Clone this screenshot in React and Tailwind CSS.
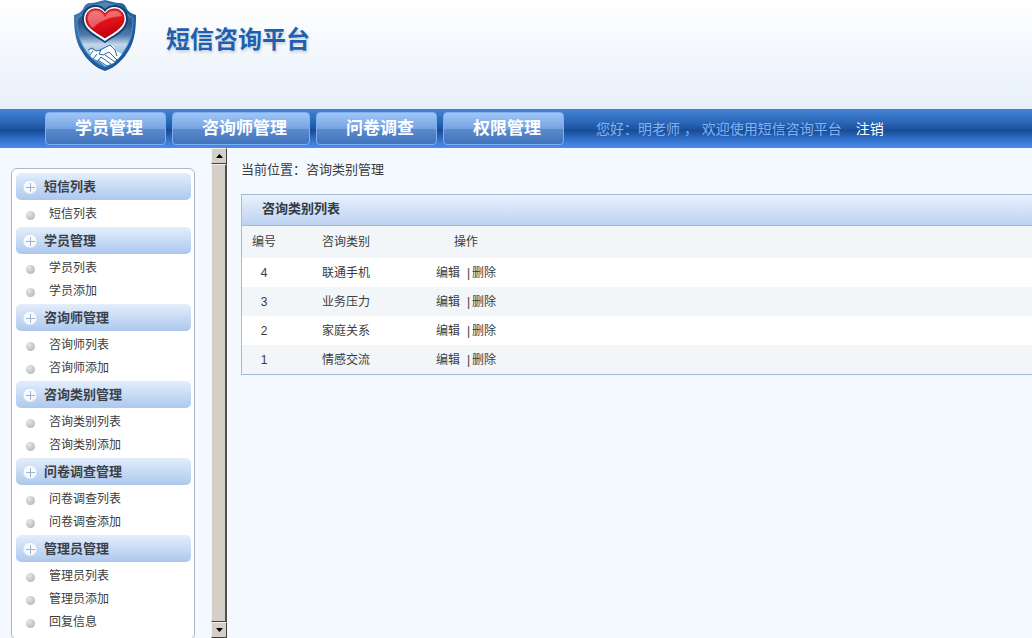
import React from "react";

const navItems = ["学员管理", "咨询师管理", "问卷调查", "权限管理"];

const menu = [
  { title: "短信列表", items: ["短信列表"] },
  { title: "学员管理", items: ["学员列表", "学员添加"] },
  { title: "咨询师管理", items: ["咨询师列表", "咨询师添加"] },
  { title: "咨询类别管理", items: ["咨询类别列表", "咨询类别添加"] },
  { title: "问卷调查管理", items: ["问卷调查列表", "问卷调查添加"] },
  { title: "管理员管理", items: ["管理员列表", "管理员添加", "回复信息"] },
];

const categories = [
  { id: 4, name: "联通手机" },
  { id: 3, name: "业务压力" },
  { id: 2, name: "家庭关系" },
  { id: 1, name: "情感交流" },
];

const Logo = () => (
  <svg viewBox="0 0 64 72" className="h-[72px] w-16" aria-hidden="true">
    <defs>
      <linearGradient id="rim" x1="0" y1="0" x2="1" y2="1">
        <stop offset="0" stopColor="#4a80b4" />
        <stop offset="0.5" stopColor="#1f5f9f" />
        <stop offset="1" stopColor="#1a5596" />
      </linearGradient>
      <linearGradient id="face" x1="0" y1="0" x2="0" y2="1">
        <stop offset="0" stopColor="#5f87b0" />
        <stop offset="0.3" stopColor="#2a5688" />
        <stop offset="0.5" stopColor="#4d7bab" />
        <stop offset="0.65" stopColor="#c3d7ea" />
        <stop offset="0.78" stopColor="#9fc3e3" />
        <stop offset="1" stopColor="#2a6fb4" />
      </linearGradient>
      <linearGradient id="heart" x1="0" y1="0" x2="0.3" y2="1">
        <stop offset="0" stopColor="#f0474c" />
        <stop offset="0.5" stopColor="#e3141b" />
        <stop offset="1" stopColor="#c4000c" />
      </linearGradient>
    </defs>
    <path
      d="M32 0C26 1 22 3 17 3C14 3 12 5 11 7C9 12 5 14 1 15C1 28 2 40 8 50C13 59 22 68 32 71C42 68 51 59 56 50C62 40 63 28 63 15C59 14 55 12 53 7C52 5 50 3 47 3C42 3 38 1 32 0Z"
      fill="url(#rim)"
    />
    <path
      d="M32 3C27 4 22 6 17 6C15 7 14 8 13 10C11 14 8 16 4 18C4 30 6 40 11 48C16 57 24 64 32 67C40 64 48 57 53 48C58 40 60 30 60 18C56 16 53 14 51 10C50 8 49 7 47 6C42 6 37 4 32 3Z"
      fill="url(#face)"
      stroke="#4f92cf"
      strokeWidth="1"
    />
    <path
      d="M32 43C24 37 9 32 9 19C9 10 15 5 22 5C27 5 30 7 32 9C34 7 37 5 42 5C49 5 55 10 55 19C55 32 40 37 32 43Z"
      fill="#173f74"
    />
    <path
      d="M32 41C24 35 11 30 11 19C11 11 17 7 22 7C27 7 30 9 32 12C34 9 37 7 42 7C47 7 53 11 53 19C53 30 40 35 32 41Z"
      fill="#ffffff"
    />
    <path
      d="M32 38C25 33 13 28 13 19C13 12 18 9 22 9C27 9 30 11 32 14C34 11 37 9 42 9C46 9 51 12 51 19C51 28 39 33 32 38Z"
      fill="url(#heart)"
      stroke="#a10a14"
      strokeWidth="1"
    />
    <path
      d="M15 19C15 13 19 11 23 11C28 11 30 14 32 17C34 13 37 11 41 11C45 11 48 13 49 16C40 17 28 19 20 28C17 26 15 23 15 19Z"
      fill="#ffffff"
      opacity="0.32"
    />
    <path
      d="M16 49L23 51L28 50L37 45L42 50L45 57L41 63L32 66L27 62L18 57Z"
      fill="#ffffff"
    />
    <path
      d="M36 46L40 46L43 51L49 54L45 59L41 57Z"
      fill="#ffffff"
    />
    <path
      d="M27 50L37 45L42 50L44 56M28 50L26 54L30 55L36 52L44 60M32 55L42 62M28 57L38 64M25 60L34 66M15 50L19 48L23 51L28 50M17 55L20 51M20 59L24 54M24 62L28 57"
      fill="none"
      stroke="#2a69ab"
      strokeWidth="1"
      strokeLinejoin="round"
    />
  </svg>
);

const PlusIcon = () => (
  <svg viewBox="0 0 16 16" className="h-4 w-4" aria-hidden="true">
    <circle cx="8" cy="8" r="7" fill="#f6f9fd" stroke="#cfdaea" />
    <path d="M4 8.5H13M8.5 4V13" stroke="#9db4d2" strokeWidth="1" />
  </svg>
);

const Header = () => (
  <header className="flex h-[109px] shrink-0 items-start bg-gradient-to-b from-white to-[#e7f0fa] pl-[73px]">
    <Logo />
    <h1 className="pt-6 pl-[29px] text-[24px] leading-8 font-bold text-[#1f5fae] [text-shadow:1px_2px_3px_#c4cedb]">
      短信咨询平台
    </h1>
  </header>
);

const NavBar = () => (
  <nav className="flex h-[39px] shrink-0 items-center bg-[linear-gradient(to_bottom,#4383d6_0%,#2b65b5_35%,#1d539f_52%,#174a92_54%,#2f6dc4_75%,#4a8df0_100%)] pl-[45px] whitespace-nowrap">
    <div className="flex gap-[6px]">
      {navItems.map((item) => (
        <button
          key={item}
          type="button"
          className="h-[33px] rounded border border-[#7fb0ee] bg-[linear-gradient(to_bottom,#a0c6f8_0%,#76a3e2_50%,#5b8acd_52%,#4173bb_100%)] pr-[22px] pl-[29px] text-[17px] leading-6 font-bold text-white"
        >
          {item}
        </button>
      ))}
    </div>
    <p className="pl-8 text-sm whitespace-pre text-[#7fb2f5]">
      您好：明老师 ， 欢迎使用短信咨询平台
    </p>
    <a href="#logout" className="pl-[14px] text-sm text-white">
      注销
    </a>
  </nav>
);

const Sidebar = () => (
  <aside className="w-[211px] shrink-0 overflow-hidden pt-5 pl-[11px]">
    <div className="w-[184px] rounded-md border border-[#a9b7c9] bg-white py-1 pr-[3px] pl-1">
      {menu.map((group) => (
        <section key={group.title}>
          <h2 className="flex h-[27px] items-center gap-[6px] rounded-[5px] bg-gradient-to-b from-[#e4eefc] to-[#acc8ee] pl-[6px] text-[13px] leading-6 font-bold text-[#3a3f48]">
            <PlusIcon />
            {group.title}
          </h2>
          <ul className="py-[2px]">
            {group.items.map((item) => (
              <li
                key={item}
                className="flex h-[23px] items-center gap-[14px] pl-[10px] text-xs"
              >
                <span className="mt-1 h-[9px] w-[9px] rounded-full bg-[radial-gradient(circle_at_35%_30%,#e3e6ea,#a9adb6)]"></span>
                <a href="#menu">{item}</a>
              </li>
            ))}
          </ul>
        </section>
      ))}
    </div>
  </aside>
);

const scrollButton =
  "flex h-4 w-4 shrink-0 items-center justify-center border border-t-[#f4f2ee] border-l-[#f4f2ee] border-r-[#404040] border-b-[#404040] bg-[#d4d0c8]";

const ScrollBar = () => (
  <div className="flex w-4 shrink-0 flex-col">
    <button type="button" aria-label="Scroll up" className={scrollButton}>
      <svg viewBox="0 0 7 4" className="h-1 w-[7px]">
        <path d="M3.5 0L7 4H0Z" fill="#000" />
      </svg>
    </button>
    <div className="flex-1 border border-t-[#f4f2ee] border-r-2 border-l-[#f4f2ee] border-r-[#505050] border-b-[#404040] bg-[#d4d0c8]"></div>
    <button type="button" aria-label="Scroll down" className={scrollButton}>
      <svg viewBox="0 0 7 4" className="h-1 w-[7px]">
        <path d="M0 0H7L3.5 4Z" fill="#000" />
      </svg>
    </button>
  </div>
);

const CategoryTable = () => (
  <section className="border border-r-0 border-[#a7b9d3]">
    <h2 className="h-[31px] border-b border-[#a7b9d3] bg-gradient-to-b from-[#e9f1fd] to-[#bdd2f1] pl-5 text-[13px] leading-7 font-bold text-[#333a44]">
      咨询类别列表
    </h2>
    <table className="w-full table-fixed text-center text-xs">
      <colgroup>
        <col className="w-11" />
        <col className="w-[120px]" />
        <col className="w-[120px]" />
        <col />
      </colgroup>
      <thead>
        <tr className="h-8 bg-[#f2f6f9]">
          <th className="font-normal">编号</th>
          <th className="font-normal">咨询类别</th>
          <th className="font-normal">操作</th>
          <td></td>
        </tr>
      </thead>
      <tbody>
        {categories.map((row) => (
          <tr key={row.id} className="h-[29px] odd:bg-white even:bg-[#f2f6f9]">
            <td>{row.id}</td>
            <td>{row.name}</td>
            <td>
              <a href="#edit">编辑</a>
              <span className="pr-[2px] pl-[7px]">|</span>
              <a href="#delete">删除</a>
            </td>
            <td></td>
          </tr>
        ))}
      </tbody>
    </table>
  </section>
);

const App = () => {
  return (
    <div className="flex h-screen flex-col overflow-hidden bg-[#f4f9ff] font-['Liberation_Sans','Noto_Sans_CJK_SC',sans-serif] text-[#3c3c3c]">
      <Header />
      <NavBar />
      <div className="flex min-h-0 flex-1">
        <Sidebar />
        <ScrollBar />
        <main className="min-w-0 flex-1 pt-3 pl-[14px]">
          <p className="pb-[14px] text-[13px] leading-5">
            当前位置：咨询类别管理
          </p>
          <CategoryTable />
        </main>
      </div>
    </div>
  );
};

export default App;
